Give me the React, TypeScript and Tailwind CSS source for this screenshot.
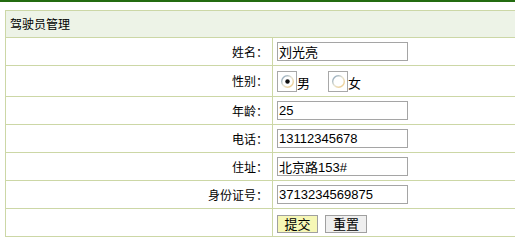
import React from "react";

const cjk = "font-['SimSun','Noto_Sans_CJK_SC',sans-serif]";
const mixed = "font-['Liberation_Sans','Noto_Sans_CJK_SC',sans-serif]";

function Radio({ checked, label }: { checked: boolean; label: string }) {
  return (
    <span className="inline-flex items-center">
      <span className="flex h-[21px] w-[20px] items-center justify-center border border-[#a8a8a8]">
        <svg width="13" height="13" viewBox="0 0 13 13">
          <defs>
            <linearGradient id={`rg-${label}`} x1="0" y1="0" x2="1" y2="1">
              <stop offset="0" stopColor="#7f9db9" />
              <stop offset="0.5" stopColor="#e8e3d0" />
              <stop offset="1" stopColor="#f0c880" />
            </linearGradient>
          </defs>
          <circle cx="6.5" cy="6.5" r="5.8" fill="#fff" stroke={`url(#rg-${label})`} strokeWidth="1.4" />
          {checked && <circle cx="6.5" cy="6.5" r="2.2" fill="#111" />}
        </svg>
      </span>
      <span className={`${cjk} text-[13px] leading-none mt-[3px]`}>{label}</span>
    </span>
  );
}

function TextField({ value }: { value: string }) {
  return (
    <input
      readOnly
      value={value}
      className={`${mixed} block h-[19px] w-[131px] border border-[#a5a5a5] bg-white px-[1px] text-[13px] leading-none text-black outline-none`}
    />
  );
}

export default function App() {
  const rows: { label: string; field: React.ReactNode; h: string }[] = [
    { label: "姓名：", field: <TextField value="刘光亮" />, h: "h-[28px]" },
    {
      label: "性别：",
      field: (
        <div className="flex items-center gap-[18px]">
          <Radio checked label="男" />
          <Radio checked={false} label="女" />
        </div>
      ),
      h: "h-[31px]",
    },
    { label: "年龄：", field: <TextField value="25" />, h: "h-[28px]" },
    { label: "电话：", field: <TextField value="13112345678" />, h: "h-[28px]" },
    { label: "住址：", field: <TextField value="北京路153#" />, h: "h-[28px]" },
    { label: "身份证号：", field: <TextField value="3713234569875" />, h: "h-[28px]" },
  ];

  return (
    <div className="h-[250px] w-[515px] overflow-hidden bg-white">
      <div className="h-[2px] bg-[#236b10]" />
      <div className="ml-[5px] mt-[8px] w-[530px]">
        <table className="w-full border-collapse text-[12px] text-black">
          <tbody>
            <tr className="h-[27px] bg-[#edf3e7]">
              <td colSpan={2} className={`${cjk} border border-[#ccd7a6] pl-[4px] text-left`}>
                驾驶员管理
              </td>
            </tr>
            {rows.map((r) => (
              <tr key={r.label} className={r.h}>
                <td className={`${cjk} w-[267px] border border-[#ccd7a6] pr-[4px] text-right`}>{r.label}</td>
                <td className="border border-[#ccd7a6] pl-[4px]">{r.field}</td>
              </tr>
            ))}
            <tr className="h-[28px]">
              <td className="w-[267px] border border-[#ccd7a6]" />
              <td className="border border-[#ccd7a6] pl-[4px]">
                <div className="flex items-center gap-[7px] pt-[2px]">
                  <button className={`${cjk} h-[18px] w-[41px] border border-[#a0a0a0] bg-[#f6f7b6] text-[13px] leading-none`}>
                    提交
                  </button>
                  <button className={`${cjk} h-[18px] w-[42px] border border-[#a0a0a0] bg-[#efefef] text-[13px] leading-none`}>
                    重置
                  </button>
                </div>
              </td>
            </tr>
          </tbody>
        </table>
      </div>
    </div>
  );
}
